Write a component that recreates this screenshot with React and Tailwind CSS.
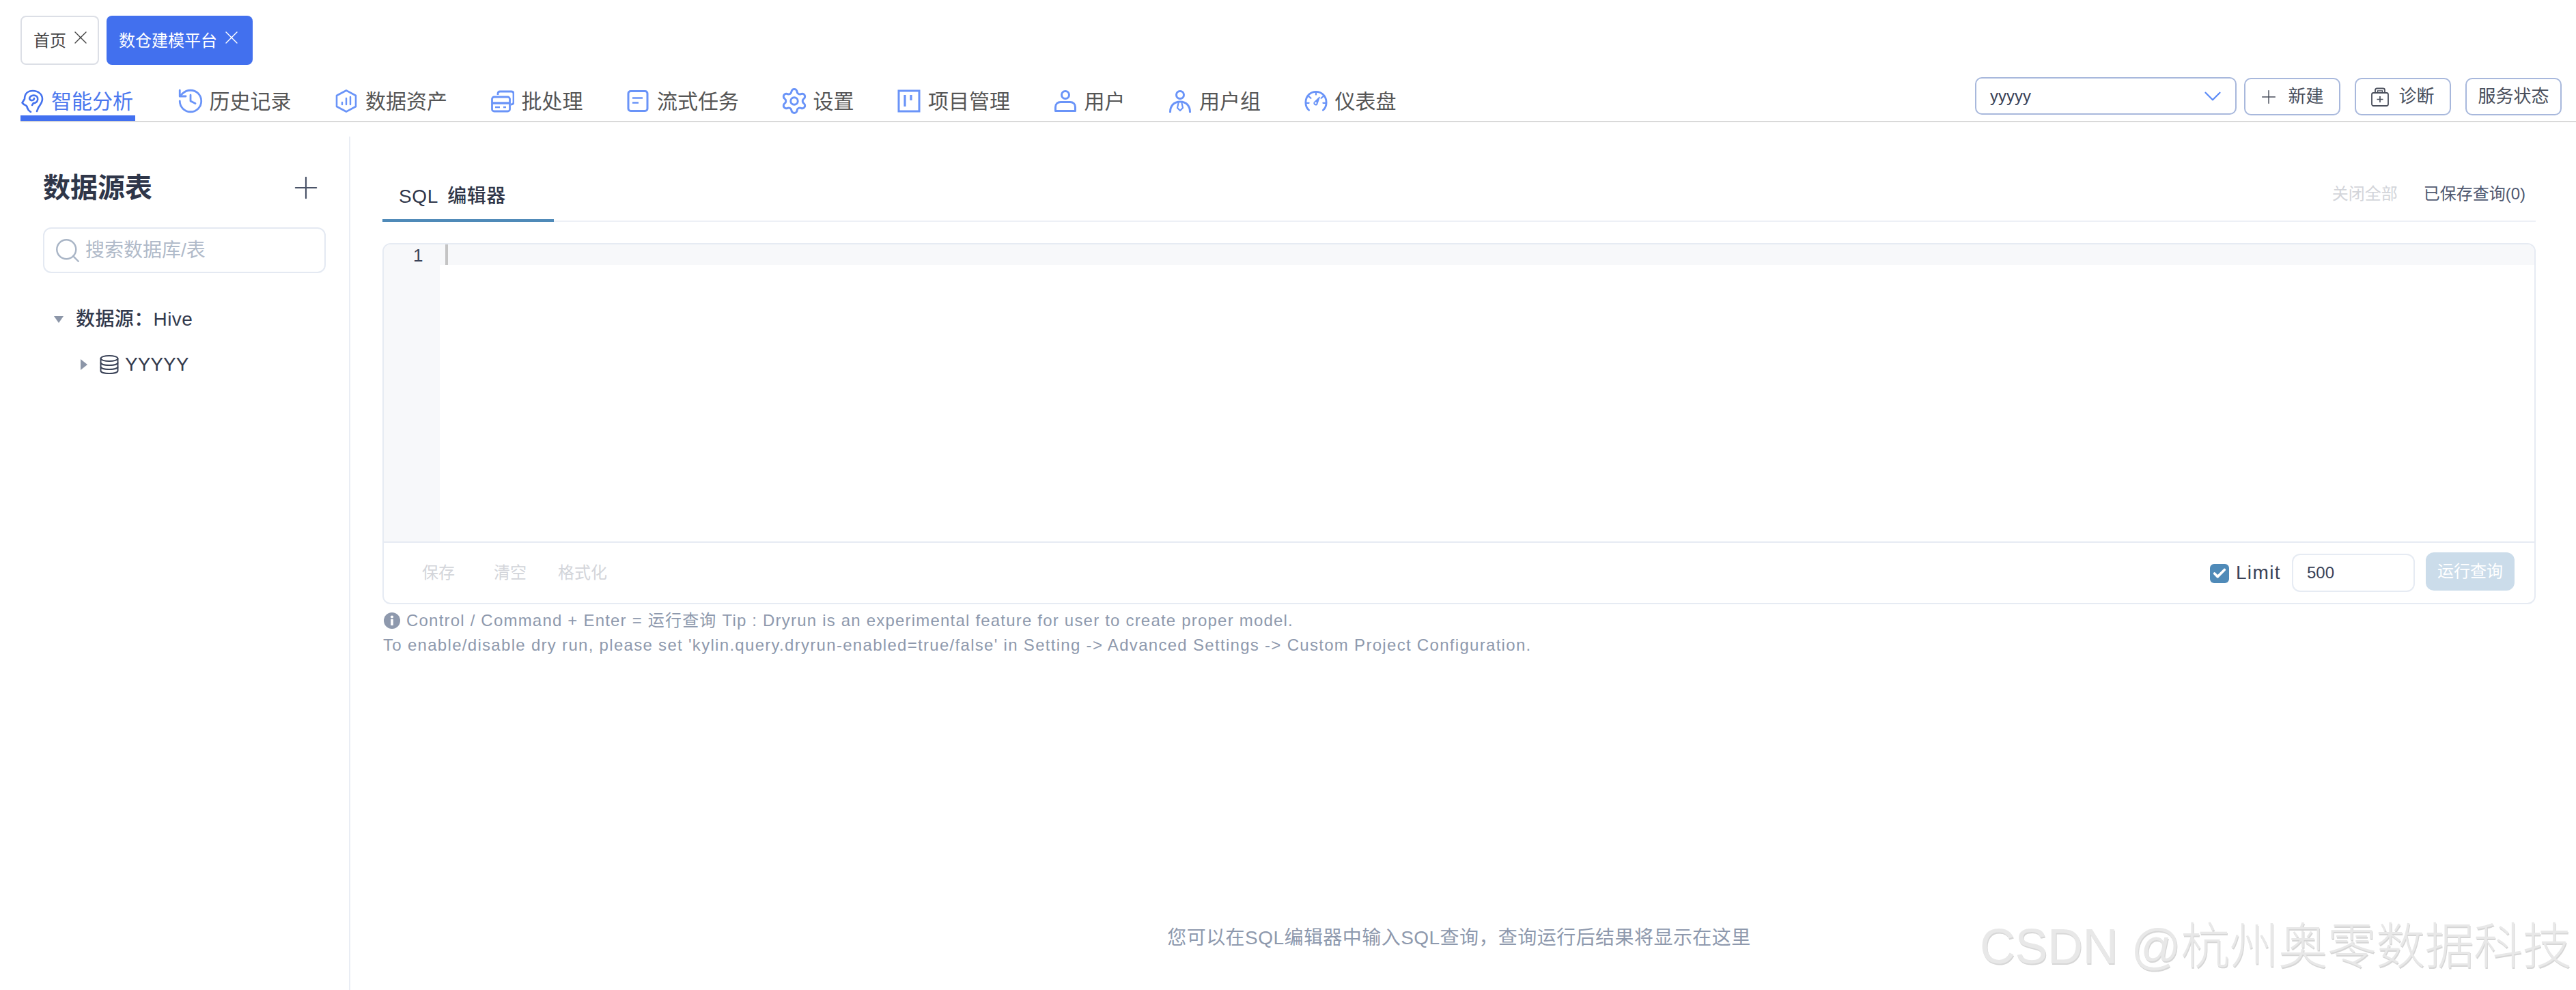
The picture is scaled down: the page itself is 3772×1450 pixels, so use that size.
import { History, Settings, Plus, ChevronDown, X, Search, Check } from 'lucide-react';

const BLUE = '#6a94f8';

const HeadIcon = () => (
  <svg width="34" height="34" viewBox="0 0 34 34" fill="none" stroke="#4472ee" strokeWidth="2.6" strokeLinecap="round" strokeLinejoin="round">
    <path d="M10 27 C10 24 8 23 5 22 L2.5 19.5 L6 14 C6 6 11 2 18 2 C26 2 32 7 32 14 C32 20 28 23 26 27 L24 32" />
    <path d="M10 27 C11 30 13 32 15 33" />
    <path d="M19 20 C24 20 26 16 25 12 C24 9 20 8 17 9 C14 10 12 13 14 15 C16 17 20 16 20 13" />
    <path d="M19 20 L17 23" />
  </svg>
);

const HexIcon = () => (
  <svg width="34" height="34" viewBox="0 0 34 34" fill="none" stroke={BLUE} strokeWidth="2.6" strokeLinejoin="round">
    <path d="M17 1.5 L31 9 V25 L17 32.5 L3 25 V9 Z" />
    <path d="M11 22 V19 M17 22 V13 M23 22 V11" strokeWidth="2.4" strokeLinecap="round" />
  </svg>
);

const BatchIcon = () => (
  <svg width="34" height="34" viewBox="0 0 34 34" fill="none" stroke={BLUE} strokeWidth="2.8" strokeLinejoin="round">
    <path d="M10 8 V6 C10 4 11 3 13 3 H30 C32 3 33 4 33 6 V19 C33 21 32 22 29 22" />
    <rect x="1.5" y="11" width="26" height="21" rx="3" />
    <path d="M2 20 H27" strokeWidth="3.4" />
    <path d="M6 26 H13 M18 26 H22" strokeWidth="2.6" />
  </svg>
);

const DocIcon = () => (
  <svg width="34" height="34" viewBox="0 0 34 34" fill="none" stroke={BLUE} strokeWidth="3">
    <rect x="3" y="2.5" width="28" height="29" rx="3.5" />
    <path d="M9 12.5 H24 M9 19.5 H18" strokeWidth="2.6" />
  </svg>
);

const BoardIcon = () => (
  <svg width="34" height="34" viewBox="0 0 34 34" fill="none" stroke={BLUE} strokeWidth="3">
    <rect x="2" y="2" width="30" height="30" />
    <path d="M11 8 V25 M20 8 V16" strokeWidth="3.2" />
  </svg>
);

const UserIcon = () => (
  <svg width="34" height="34" viewBox="0 0 34 34" fill="none" stroke={BLUE} strokeWidth="3">
    <circle cx="17" cy="8" r="5.5" />
    <path d="M2.5 31.5 V26 C2.5 21 6 18.5 10 18.5 H24 C28 18.5 31.5 21 31.5 26 V31.5 Z" strokeLinejoin="round" />
  </svg>
);

const TeamIcon = () => (
  <svg width="34" height="34" viewBox="0 0 34 34" fill="none" stroke={BLUE} strokeWidth="3" strokeLinecap="round">
    <circle cx="17" cy="8" r="5.5" />
    <path d="M2.5 33 C2.5 24 8 18 17 18 C26 18 31.5 24 31.5 33" />
    <path d="M14.5 20 L13 27 L17 31 L21 27 L19.5 20" strokeWidth="2.2" strokeLinejoin="round" />
  </svg>
);

const GaugeIcon = () => (
  <svg width="34" height="34" viewBox="0 0 36 34" fill="none" stroke={BLUE} strokeWidth="3" strokeLinecap="round">
    <path d="M7 31 C3.5 28 2 24 2 19 C2 9.5 9 2.5 18 2.5 C27 2.5 34 9.5 34 19 C34 24 32.5 28 29 31" />
    <path d="M18 3 V7 M7 10 L10 12.5 M29 10 L26 12.5 M3 20 H7 M33 20 H29" strokeWidth="2.4" />
    <path d="M23.5 11 L15 19 C14 22 17 24.5 19.5 22.5 Z" fill={BLUE} stroke={BLUE} strokeWidth="1.4" strokeLinejoin="round" />
    <circle cx="17.5" cy="20" r="1.4" fill="#fff" stroke="none" />
  </svg>
);

const DiagnoseIcon = () => (
  <svg width="26" height="28" viewBox="0 0 26 28" fill="none" stroke="#4a4f5c" strokeWidth="1.8">
    <rect x="1" y="8" width="24" height="19" rx="2.5" />
    <path d="M6 8 V4 C6 2.5 7 1.5 8.5 1.5 H17.5 C19 1.5 20 2.5 20 4 V8" />
    <path d="M9.5 8 V5 H16.5 V8" strokeWidth="1.4" />
    <path d="M13 13 V22 M8.5 17.5 H17.5" strokeWidth="1.7" />
  </svg>
);

const DbIcon = () => (
  <svg width="28" height="28" viewBox="0 0 28 28" fill="none" stroke="#3a4257" strokeWidth="2">
    <ellipse cx="14" cy="5" rx="12.5" ry="4" />
    <path d="M1.5 5 V23 C1.5 25.5 7 27 14 27 C21 27 26.5 25.5 26.5 23 V5" />
    <path d="M1.5 11 C1.5 13.5 7 15 14 15 C21 15 26.5 13.5 26.5 11" />
    <path d="M1.5 17 C1.5 19.5 7 21 14 21 C21 21 26.5 19.5 26.5 17" />
  </svg>
);

const InfoDot = () => (
  <svg width="24" height="24" viewBox="0 0 24 24" className="shrink-0">
    <circle cx="12" cy="12" r="12" fill="#8e99ad" />
    <rect x="10.2" y="10" width="3.6" height="9" fill="#fff" />
    <circle cx="12" cy="6.5" r="2.1" fill="#fff" />
  </svg>
);

const navItems = [
  { label: '智能分析', icon: <HeadIcon />, active: true },
  { label: '历史记录', icon: <History size={42} color={BLUE} strokeWidth={1.6} className="-m-[4px]" /> },
  { label: '数据资产', icon: <HexIcon /> },
  { label: '批处理', icon: <BatchIcon /> },
  { label: '流式任务', icon: <DocIcon /> },
  { label: '设置', icon: <Settings size={42} color={BLUE} strokeWidth={1.7} className="-m-[4px]" /> },
  { label: '项目管理', icon: <BoardIcon /> },
  { label: '用户', icon: <UserIcon /> },
  { label: '用户组', icon: <TeamIcon /> },
  { label: '仪表盘', icon: <GaugeIcon /> },
];

export default function App() {
  return (
    <div className="relative h-[1450px] w-[3772px] overflow-hidden bg-white font-['Liberation_Sans','Noto_Sans_CJK_SC',sans-serif] text-[#3a4257]">
      {/* Tabs */}
      <div className="flex h-[95px] items-start gap-[11px] pl-[30px] pt-[23px]">
        <div className="flex h-[72px] w-[115px] items-center gap-[5px] rounded-[8px] border-2 border-[#dcdfe6] pl-[17px] text-[24px] text-[#444]">
          <span className="mt-[2px]">首页</span>
          <X size={32} strokeWidth={1} className="-mt-[8px]" />
        </div>
        <div className="flex h-[72px] w-[214px] items-center gap-[5px] rounded-[8px] bg-[#4270ee] pl-[18px] text-[24px] text-white">
          <span className="mt-[2px]">数仓建模平台</span>
          <X size={32} strokeWidth={1} className="-mt-[8px]" />
        </div>
      </div>

      {/* Nav */}
      <div className="ml-[30px] flex h-[84px] items-start justify-between border-b-2 border-[#d9d9d9] pr-[21px]">
        <div className="flex gap-[63.5px] pt-[18px]">
          {navItems.map((item) => (
            <div
              key={item.label}
              className={`flex h-[64px] items-center gap-[11px] border-b-[8px] pt-[14px] text-[30px] ${item.active ? 'w-[168px] border-[#4270f0] text-[#4a77ee]' : 'border-transparent text-[#555]'}`}
            >
              {item.icon}
              <span>{item.label}</span>
            </div>
          ))}
        </div>
        <div className="flex items-start pt-[18px] text-[26px] text-[#4a4f5c]">
          <div className="flex h-[55px] w-[383px] items-center justify-between rounded-[10px] border-2 border-[#a8b8dc] pl-[20px] pr-[12px] text-[24px] text-[#3a4257]">
            <span>yyyyy</span>
            <ChevronDown size={42} color="#5b8bf7" strokeWidth={1.3} />
          </div>
          <div className="ml-[11px] mt-[1px] flex h-[55px] w-[141px] items-center justify-center gap-[16px] rounded-[10px] border-2 border-[#a8b8dc]">
            <Plus size={32} strokeWidth={1.1} className="-mx-[4px]" />
            <span>新建</span>
          </div>
          <div className="ml-[21px] mt-[1px] flex h-[55px] w-[141px] items-center justify-center gap-[14px] rounded-[10px] border-2 border-[#a8b8dc]">
            <DiagnoseIcon />
            <span>诊断</span>
          </div>
          <div className="ml-[21px] mt-[1px] flex h-[55px] w-[141px] items-center justify-center rounded-[10px] border-2 border-[#a8b8dc]">
            服务状态
          </div>
        </div>
      </div>

      {/* Main */}
      <div className="mt-[21px] flex h-[1250px]">
        <aside className="w-[513px] shrink-0 border-r-2 border-[#e9edf4] pl-[63px] pt-[47px]">
          <div className="flex h-[56px] w-[411px] items-center justify-between">
            <h1 className="text-[40px] font-bold text-[#2f3649]">数据源表</h1>
            <Plus size={52} strokeWidth={1} color="#4a5368" />
          </div>
          <div className="mt-[30px] flex h-[67px] w-[414px] items-center gap-[5px] rounded-[12px] border-2 border-[#e4e9f2] pl-[13px] text-[28px] text-[#b0bac9]">
            <Search size={42} strokeWidth={1.4} color="#a9b5c6" />
            <span>搜索数据库/表</span>
          </div>
          <div className="mt-[48px] flex h-[40px] items-center pl-[16px] text-[28px] font-medium tracking-[0.4px] text-[#333a4d]">
            <span className="h-0 w-0 border-x-[7px] border-t-[10px] border-x-transparent border-t-[#8c96a8]" />
            <span className="ml-[18px]">数据源：Hive</span>
          </div>
          <div className="mt-[26px] flex h-[40px] items-center pl-[55px] text-[28px] text-[#333a4d]">
            <span className="h-0 w-0 border-y-[8px] border-l-[10px] border-y-transparent border-l-[#8c96a8]" />
            <span className="ml-[18px]"><DbIcon /></span>
            <span className="ml-[9px]">YYYYY</span>
          </div>
        </aside>

        <main className="flex-1 pl-[47px] pr-[59px]">
          <div className="flex h-[125px] items-end justify-between border-b-2 border-[#edf0f6]">
            <div className="-mb-[2px] flex h-[74px] w-[251px] items-center border-b-4 border-[#4f8ab8] pl-[24px] pt-[4px] text-[28px] font-medium tracking-[0.6px] [word-spacing:6px] text-[#2f3649]">
              SQL 编辑器
            </div>
            <div className="flex gap-[38px] pb-[27px] pr-[15px] text-[24px] leading-[24px]">
              <span className="text-[#d3d5da]">关闭全部</span>
              <span className="text-[#4f5870]">已保存查询(0)</span>
            </div>
          </div>

          {/* Editor */}
          <div className="mt-[31px] h-[529px] overflow-hidden rounded-[12px] border-2 border-[#e6ebf3]">
            <div className="flex h-[435px]">
              <div className="w-[82px] shrink-0 bg-[#f7f8fa] pl-[43px] pt-[1px] text-[26px] leading-[30px] text-[#3a4257]">1</div>
              <div className="h-[30px] flex-1 bg-[#f7f8fa] pl-[8px]">
                <div className="h-[30px] w-[4px] bg-[#c4c4c4]" />
              </div>
            </div>
            <div className="flex h-[90px] items-center justify-between border-t-2 border-[#e6ebf3] pl-[56px] pr-[29px]">
              <div className="flex text-[24px] text-[#d3d5da]">
                <span>保存</span>
                <span className="ml-[57px]">清空</span>
                <span className="ml-[46px]">格式化</span>
              </div>
              <div className="flex items-center">
                <span className="mt-[2px] flex h-[28px] w-[28px] items-center justify-center rounded-[6px] bg-[#4f8ab8]">
                  <Check size={22} strokeWidth={4} color="#fff" />
                </span>
                <span className="ml-[10px] text-[28px] tracking-[1.4px] text-[#3a4257]">Limit</span>
                <div className="ml-[16px] flex h-[56px] w-[180px] items-center rounded-[12px] border-2 border-[#e6ebf3] pl-[20px] text-[24px] text-[#3a4257]">500</div>
                <div className="-mt-[4px] ml-[16px] flex h-[56px] w-[130px] items-center justify-center rounded-[12px] bg-[#cbdcea] text-[24px] text-white">运行查询</div>
              </div>
            </div>
          </div>

          {/* Tips */}
          <div className="mt-[6px] text-[24px] leading-[36px] tracking-[1.3px] text-[#8e99ad]">
            <p className="flex items-center gap-[9px] pl-[2px] tracking-[1.2px]">
              <InfoDot />
              <span>Control / Command + Enter = 运行查询 Tip : Dryrun is an experimental feature for user to create proper model.</span>
            </p>
            <p className="pl-[1px]">To enable/disable dry run, please set 'kylin.query.dryrun-enabled=true/false' in Setting -&gt; Advanced Settings -&gt; Custom Project Configuration.</p>
          </div>

          <p className="mt-[391px] text-center text-[28px] leading-[40px] tracking-[0.45px] text-[#8e99ad]">您可以在SQL编辑器中输入SQL查询，查询运行后结果将显示在这里</p>
        </main>
      </div>

      {/* CSDN watermark */}
      <div className="absolute left-[2899px] top-[1350px] whitespace-nowrap text-[72px] font-light leading-[73px] tracking-[-0.5px] text-[#e8e8e8] [text-shadow:1px_2px_0_#d6d6d6]">
        CSDN @杭州奥零数据科技
      </div>
    </div>
  );
}
